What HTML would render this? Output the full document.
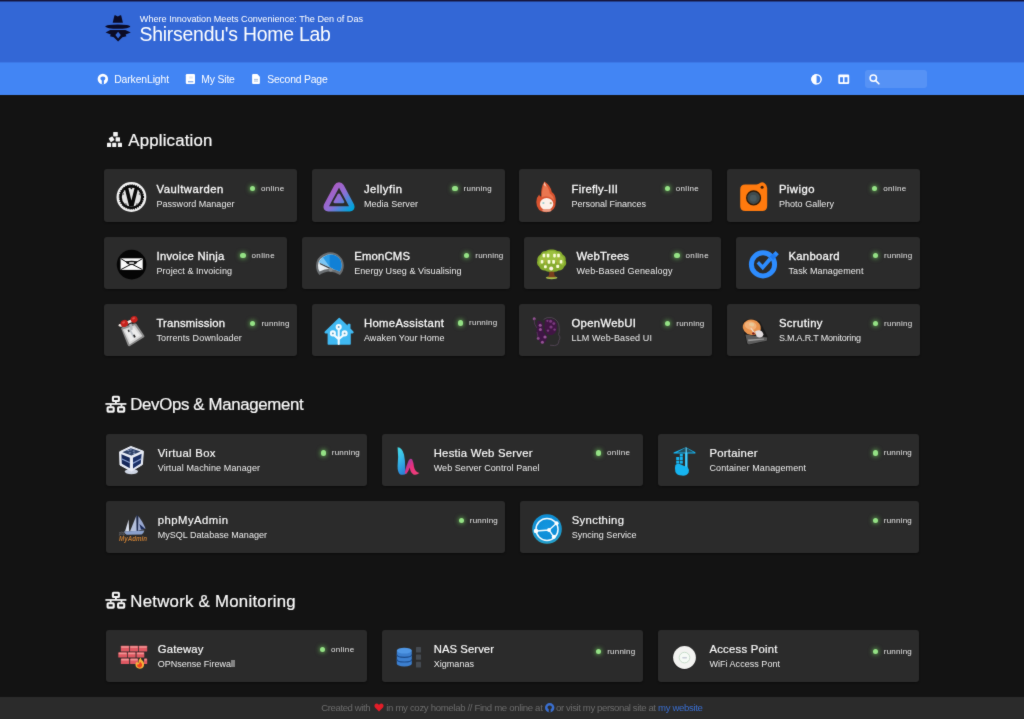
<!DOCTYPE html>
<html lang="en">
<head>
<meta charset="utf-8">
<title>Shirsendu's Home Lab</title>
<style>
*{box-sizing:border-box;margin:0;padding:0}
html,body{width:1024px;height:719px;overflow:hidden;background:#131313;font-family:"Liberation Sans",sans-serif;color:#eaeaea}
body{position:relative}
#app{position:absolute;left:0;top:0;width:1024px;height:719px;background:#131313;will-change:transform;filter:url(#soft)}
.topline{position:absolute;left:0;top:0;width:1024px;height:2px;background:linear-gradient(#15153e 0,#15153e 1px,#243f8c 1px,#243f8c 2px);z-index:2}
header.hero{position:absolute;left:0;top:0;width:1024px;height:63px;background:#3367d6}
.headline{position:absolute;left:139.8px;top:12.9px;font-size:9.1px;line-height:12px;color:#fff;white-space:nowrap}
h1.title{position:absolute;left:139.5px;top:22px;font-size:19.4px;line-height:24px;font-weight:400;color:#fff;white-space:nowrap}
nav.navbar{position:absolute;left:0;top:62px;width:1024px;height:33px;background:#4285f4;border-top:1px solid #3c79e8}
nav a{position:absolute;top:0.9px;height:32.7px;line-height:32.7px;font-size:9.7px;color:#fff;white-space:nowrap;text-decoration:none}
.search{position:absolute;left:865px;top:6.5px;width:62px;height:18.6px;border-radius:3px;background:rgba(255,255,255,.11)}
h2.group{-webkit-text-stroke:.2px #fafafa;position:absolute;font-size:16.8px;line-height:20px;font-weight:400;color:#fafafa;white-space:nowrap}
.card{position:absolute;height:52.4px;background:#2b2b2b;border-radius:3px;box-shadow:0 1px 2px rgba(0,0,0,.4)}
svg.ic{position:absolute;display:block;overflow:visible}
.card p{position:absolute;left:52.2px;white-space:nowrap}
.card p.t{top:12.4px;font-size:11.3px;line-height:14px;color:#fafafa;-webkit-text-stroke:.3px #fafafa}
.card p.t.l{-webkit-text-stroke:.18px #fafafa}
.card p.s{top:28.4px;font-size:9px;line-height:12px;color:#ededed}
.st{position:absolute;top:14px;height:11px;font-size:8px;line-height:11px;color:#e6e6e6;white-space:nowrap}
.st i{position:absolute;left:-2.6px;top:3px;width:5.2px;height:5.2px;border-radius:50%;background:#94e185;box-shadow:0 0 4px 1px rgba(120,220,100,.55)}
.st span{position:absolute;left:8.6px;top:0}
.st.online span{letter-spacing:.33px}
.st.running span{letter-spacing:.22px}
footer{position:absolute;left:0;top:697px;width:1024px;height:22px;background:#2b2b2b;color:#6c6c6c;font-size:9.2px;white-space:nowrap}
footer span,footer a{position:absolute;top:0.2px;line-height:22px;height:22px}
footer a{color:#3a6ecf;text-decoration:none}
</style>
</head>
<body>
<svg width="0" height="0" style="position:absolute" aria-hidden="true"><defs><filter id="soft" x="0" y="0" width="100%" height="100%" color-interpolation-filters="sRGB"><feConvolveMatrix order="3" kernelMatrix="0.02 0.065 0.02 0.065 0.66 0.065 0.02 0.065 0.02" divisor="1" edgeMode="duplicate" preserveAlpha="true"/></filter></defs></svg>
<div id="app">
<div class="topline"></div>
<header class="hero">
  <p class="headline"><span style="font-size:9.1px;letter-spacing:0.009px">Where Innovation Meets Convenience: The Den of Das</span></p>
  <h1 class="title"><span style="font-size:19.4px;letter-spacing:-0.225px">Shirsendu's Home Lab</span></h1>
</header>
<nav class="navbar">
  <a href="#" style="left:114.2px"><span style="font-size:10.4px;letter-spacing:-0.113px">DarkenLight</span></a>
  <a href="#" style="left:201.3px"><span style="font-size:10.4px;letter-spacing:-0.176px">My Site</span></a>
  <a href="#" style="left:267.3px"><span style="font-size:10.4px;letter-spacing:-0.201px">Second Page</span></a>
  <div class="search"></div>
</nav>
<main>
<h2 class="group" style="left:128.3px;top:130.7px"><span style="font-size:16.8px;letter-spacing:0.189px">Application</span></h2>
<h2 class="group" style="left:130.3px;top:395.2px"><span style="font-size:16.8px;letter-spacing:-0.316px">DevOps &amp; Management</span></h2>
<h2 class="group" style="left:130.3px;top:591.6px"><span style="font-size:16.8px;letter-spacing:0.262px">Network &amp; Monitoring</span></h2>
<div class="card" style="left:104.3px;top:169.3px;width:192.7px">
<p class="t" style="left:52.2px;letter-spacing:0.483px">Vaultwarden</p>
<p class="s" style="left:52.2px;letter-spacing:0.03px">Password Manager</p>
<div class="st online" style="left:148.2px;top:13.9px"><i></i><span>online</span></div>
</div>
<div class="card" style="left:311.7px;top:169.3px;width:193.0px">
<p class="t" style="left:52.2px;letter-spacing:0.51px">Jellyfin</p>
<p class="s" style="left:52.2px;letter-spacing:0.052px">Media Server</p>
<div class="st running" style="left:143.3px;top:13.9px"><i></i><span>running</span></div>
</div>
<div class="card" style="left:519.3px;top:169.3px;width:192.7px">
<p class="t" style="left:52.2px;letter-spacing:0.256px">Firefly-III</p>
<p class="s" style="left:52.2px;letter-spacing:-0.003px">Personal Finances</p>
<div class="st online" style="left:147.9px;top:13.9px"><i></i><span>online</span></div>
</div>
<div class="card" style="left:726.7px;top:169.3px;width:193.0px">
<p class="t" style="left:52.2px;letter-spacing:0.464px">Piwigo</p>
<p class="s" style="left:52.2px;letter-spacing:0.047px">Photo Gallery</p>
<div class="st online" style="left:148.0px;top:13.9px"><i></i><span>online</span></div>
</div>
<div class="card" style="left:104.3px;top:236.7px;width:182.5px">
<p class="t" style="left:52.2px;letter-spacing:0.259px">Invoice Ninja</p>
<p class="s" style="left:52.2px;letter-spacing:0.053px">Project &amp; Invoicing</p>
<div class="st online" style="left:138.7px;top:13.6px"><i></i><span>online</span></div>
</div>
<div class="card" style="left:302.0px;top:236.7px;width:207.5px">
<p class="t" style="left:52.2px;letter-spacing:0.196px">EmonCMS</p>
<p class="s" style="left:52.2px;letter-spacing:0.059px">Energy Useg &amp; Visualising</p>
<div class="st running" style="left:164.7px;top:13.6px"><i></i><span>running</span></div>
</div>
<div class="card" style="left:524.3px;top:236.7px;width:197.0px">
<p class="t" style="left:52.2px;letter-spacing:0.145px">WebTrees</p>
<p class="s" style="left:52.2px;letter-spacing:0.172px">Web-Based Genealogy</p>
<div class="st online" style="left:152.7px;top:13.6px"><i></i><span>online</span></div>
</div>
<div class="card" style="left:736.3px;top:236.7px;width:183.4px">
<p class="t" style="left:52.2px;letter-spacing:0.286px">Kanboard</p>
<p class="s" style="left:52.2px;letter-spacing:0.104px">Task Management</p>
<div class="st running" style="left:139.2px;top:13.6px"><i></i><span>running</span></div>
</div>
<div class="card" style="left:104.3px;top:304.0px;width:192.7px">
<p class="t" style="left:52.2px;letter-spacing:0.159px">Transmission</p>
<p class="s" style="left:52.2px;letter-spacing:0.125px">Torrents Downloader</p>
<div class="st running" style="left:148.5px;top:13.8px"><i></i><span>running</span></div>
</div>
<div class="card" style="left:311.7px;top:304.0px;width:193.0px">
<p class="t" style="left:52.2px;letter-spacing:0.344px">HomeAssistant</p>
<p class="s" style="left:52.2px;letter-spacing:0.114px">Awaken Your Home</p>
<div class="st running" style="left:148.8px;top:13.4px"><i></i><span>running</span></div>
</div>
<div class="card" style="left:519.3px;top:304.0px;width:192.7px">
<p class="t" style="left:52.2px;letter-spacing:0.316px">OpenWebUI</p>
<p class="s" style="left:52.2px;letter-spacing:0.142px">LLM Web-Based UI</p>
<div class="st running" style="left:148.4px;top:13.8px"><i></i><span>running</span></div>
</div>
<div class="card" style="left:726.7px;top:304.0px;width:193.0px">
<p class="t" style="left:52.2px;letter-spacing:0.398px">Scrutiny</p>
<p class="s" style="left:52.2px;letter-spacing:-0.199px">S.M.A.R.T Monitoring</p>
<div class="st running" style="left:148.8px;top:13.6px"><i></i><span>running</span></div>
</div>
<div class="card" style="left:106.0px;top:433.5px;width:261.0px">
<p class="t l" style="left:51.7px;letter-spacing:0.338px">Virtual Box</p>
<p class="s" style="left:51.7px;letter-spacing:0.11px">Virtual Machine Manager</p>
<div class="st running" style="left:217.2px;top:13.9px"><i></i><span>running</span></div>
</div>
<div class="card" style="left:382.0px;top:433.5px;width:261.0px">
<p class="t l" style="left:51.7px;letter-spacing:0.262px">Hestia Web Server</p>
<p class="s" style="left:51.7px;letter-spacing:0.061px">Web Server Control Panel</p>
<div class="st online" style="left:216.3px;top:13.9px"><i></i><span>online</span></div>
</div>
<div class="card" style="left:657.7px;top:433.5px;width:261.3px">
<p class="t l" style="left:51.7px;letter-spacing:0.282px">Portainer</p>
<p class="s" style="left:51.7px;letter-spacing:0.134px">Container Management</p>
<div class="st running" style="left:217.5px;top:13.9px"><i></i><span>running</span></div>
</div>
<div class="card" style="left:106.0px;top:501.0px;width:399.0px">
<p class="t l" style="left:51.7px;letter-spacing:0.485px">phpMyAdmin</p>
<p class="s" style="left:51.7px;letter-spacing:0.027px">MySQL Database Manager</p>
<div class="st running" style="left:355.2px;top:13.9px"><i></i><span>running</span></div>
</div>
<div class="card" style="left:520.0px;top:501.0px;width:399.0px">
<p class="t l" style="left:51.7px;letter-spacing:0.334px">Syncthing</p>
<p class="s" style="left:51.7px;letter-spacing:0.019px">Syncing Service</p>
<div class="st running" style="left:355.2px;top:13.9px"><i></i><span>running</span></div>
</div>
<div class="card" style="left:106.0px;top:630.0px;width:261.0px">
<p class="t l" style="left:51.7px;letter-spacing:0.201px">Gateway</p>
<p class="s" style="left:51.7px;letter-spacing:0.017px">OPNsense Firewall</p>
<div class="st online" style="left:216.5px;top:13.9px"><i></i><span>online</span></div>
</div>
<div class="card" style="left:382.0px;top:630.0px;width:261.0px">
<p class="t l" style="left:51.7px;letter-spacing:0.073px">NAS Server</p>
<p class="s" style="left:51.7px;letter-spacing:0.038px">Xigmanas</p>
<div class="st running" style="left:216.6px;top:15.8px"><i></i><span>running</span></div>
</div>
<div class="card" style="left:657.7px;top:630.0px;width:261.3px">
<p class="t l" style="left:51.7px;letter-spacing:0.253px">Access Point</p>
<p class="s" style="left:51.7px;letter-spacing:0.038px">WiFi Access Pont</p>
<div class="st running" style="left:217.5px;top:15.8px"><i></i><span>running</span></div>
</div>
<svg class="ic" style="left:111px;top:177px" width="40" height="40" viewBox="0 0 40 40"><circle cx="20.4" cy="20" r="14.9" fill="#f2f2f2"/>
<circle cx="20.4" cy="20" r="11.9" fill="#0a0a0a" stroke="#0a0a0a" stroke-width="1.6" stroke-dasharray="1.1 1.05"/>
<circle cx="20.4" cy="20" r="9.6" fill="#e4e4e4"/>
<path d="M13.5 10.6 L17.2 10.6 L20.4 23.6 L23.7 10.6 L27.3 10.6 L22.6 29.6 L18.2 29.6 Z" fill="#0a0a0a"/>
<path d="M18.7 10.3 L22.1 10.3 L20.4 12.4 Z" fill="#0a0a0a"/>
<circle cx="12.2" cy="17" r="1" fill="#777"/><circle cx="28.6" cy="17" r="1" fill="#777"/><circle cx="14.8" cy="27.2" r="1" fill="#666"/><circle cx="26" cy="27.2" r="1" fill="#666"/></svg>
<svg class="ic" style="left:319px;top:177px" width="40" height="40" viewBox="0 0 40 40"><defs><linearGradient id="jg" gradientUnits="userSpaceOnUse" x1="11" y1="12" x2="32" y2="32"><stop offset="0" stop-color="#aa5cc3"/><stop offset=".45" stop-color="#8f6fd6"/><stop offset="1" stop-color="#00a4dc"/></linearGradient></defs><path d="M20 7.8 Q21.5 7.8 22.4 9.4 L32.6 28.4 Q33.8 31.6 30.6 31.9 L9.4 31.9 Q6.2 31.6 7.4 28.4 L17.6 9.4 Q18.5 7.8 20 7.8 Z" fill="none" stroke="url(#jg)" stroke-width="5.3" stroke-linejoin="round"/>
<path d="M19.9 16.6 Q20.7 16.6 21.3 17.6 L25.2 24.6 Q25.8 26.3 24.2 26.3 L15.6 26.3 Q14 26.3 14.6 24.6 L18.5 17.6 Q19.1 16.6 19.9 16.6 Z" fill="url(#jg)"/></svg>
<svg class="ic" style="left:526px;top:177px" width="40" height="40" viewBox="0 0 40 40"><path d="M18.4 4.6 Q24.6 8.6 25.8 15 Q29.6 17.2 29.8 24 Q30 34.6 20.4 35.2 Q10.4 35 10.3 25 Q10.3 20.4 13.2 17.4 Q13.8 19.8 15.2 19.4 Q14.6 10.5 18.4 4.6 Z" fill="#d8532f"/>
<path d="M18.8 6.6 Q23 11 23.8 16.4 Q27.6 18.4 27.9 23.6 Q25 19.6 20 19.6 Q17 19.6 15.8 20.6 Q15.6 12 18.8 6.6 Z" fill="#ea7650"/>
<path d="M18.3 5 Q20 7.4 20.4 10 Q19.2 8.2 17.6 8.2 Z" fill="#f6c4ae"/>
<ellipse cx="20.6" cy="27" rx="6.7" ry="6" fill="#fcf0ea"/>
<ellipse cx="20.8" cy="33.4" rx="4.6" ry="1.4" fill="#ea9c84"/>
<circle cx="17.4" cy="26" r="1.1" fill="#9cc"/><circle cx="24.8" cy="26.2" r="1.1" fill="#b9a877"/></svg>
<svg class="ic" style="left:734px;top:177px" width="40" height="40" viewBox="0 0 40 40"><path d="M11.2 7.6 L22.4 7.4 Q24.4 7.2 26 6 Q28.4 4.6 30.6 6.2 Q33.2 8 33.2 11 L33.2 28.8 Q33.2 34 28 34 L11.2 34 Q6.2 34 6.2 29 L6.2 12.6 Q6.2 7.6 11.2 7.6 Z" fill="#ff7a0e"/>
<circle cx="19.6" cy="20.9" r="6.9" fill="#3f4a4c" stroke="#2a1a0a" stroke-width="1.3"/>
<circle cx="19.3" cy="21.2" r="3.4" fill="#4a5a5e"/>
<circle cx="28.1" cy="10.3" r="1.5" fill="#3a1a08"/></svg>
<svg class="ic" style="left:111px;top:244px" width="40" height="40" viewBox="0 0 40 40"><circle cx="20.6" cy="20.6" r="14.8" fill="#050505"/>
<path d="M9.6 14.3 L31.7 14.3 L31.7 25.9 L9.6 25.9 Z" fill="#fafafa"/>
<path d="M9.8 25.6 L20.6 20 L31.5 25.6 M9.8 14.6 L17 19 M31.5 14.6 L24.2 19" stroke="#111" stroke-width="1" fill="none"/>
<path d="M14.6 17.2 Q20.6 16.4 26.6 17.2 L25.4 19.6 Q20.6 22.6 15.8 19.6 Z" fill="#111"/>
<rect x="18" y="18.2" width="5.2" height="1.5" rx=".7" fill="#fafafa"/></svg>
<svg class="ic" style="left:309px;top:244px" width="40" height="40" viewBox="0 0 40 40"><path d="M10.4 31 Q6.8 26.6 7 21.4 Q7.6 11.4 18.6 8.6 Q23 7.8 27 9.6 Q34.6 13.4 34.8 21.6 Q34.8 27 31 31 Q26 27.4 20.8 27.4 Q15.4 27.4 10.4 31 Z" fill="#6b6f72"/>
<path d="M10.6 27.6 Q8.8 24.6 9 21.2 Q9.6 13.4 18.8 10.8 Q23 10.2 26.4 11.6 Q32.4 14.6 32.6 21.6 Q32.6 25 30.6 27.6 Q26 24.8 20.8 24.8 Q15.4 24.8 10.6 27.6 Z" fill="#e8eef2"/>
<path d="M10.2 18.2 Q12.8 12.6 18.8 10.8 Q23 10.2 26.4 11.6 Q32.4 14.6 32.6 21.6 Q32.6 25 30.6 27.6 Q28 26 25 25.3 L20.8 23 Z" fill="#2a9be6"/>
<path d="M20.6 11 Q23.6 10.4 26.4 11.6 Q32.4 14.6 32.6 21.6 Q32.6 25 30.6 27.6 Q28 26 25 25.3 L20.8 23 Z" fill="#1180d6"/>
<path d="M10.2 18.2 Q11.4 15.4 14 13.4 L20.8 23 Z" fill="#7cc6f4"/>
<path d="M11 19 L23 24.4 L22.4 25.8 L10.6 20 Z" fill="#3a4046"/>
<circle cx="21.6" cy="25.8" r="2" fill="#8a8e90"/></svg>
<svg class="ic" style="left:531px;top:244px" width="40" height="40" viewBox="0 0 40 40"><ellipse cx="20.6" cy="33.8" rx="5.8" ry="1.5" fill="#a9bf4a"/>
<path d="M18 26 L23.4 26 L23.2 30 Q23.6 32.4 25 33.2 L16.4 33.2 Q18 32.4 18.2 30 Z" fill="#7a3f1e"/>
<path d="M20.6 5.6 Q24 5 26.4 7 Q30.4 7 31.6 10.4 Q35.4 12.4 34.6 16.6 Q36.4 20.6 33 23 Q31.6 26.6 27.6 26.4 Q24.4 28.6 20.8 27.4 Q17 28.6 14 26.4 Q9.6 26.6 8.4 23 Q5 20.6 6.4 16.6 Q5.8 12.4 9.6 10.4 Q10.8 7 14.8 7 Q17.2 5 20.6 5.6 Z" fill="#86ac2e"/>
<path d="M20.6 7 Q23.6 6.6 25.6 8.4 Q29 8.6 30 11.4 Q33.2 13 32.8 16.6 Q34 19.6 31.6 21.6 Q24 17 20.6 17 Q14 17 9 21 Q7.2 19.6 8.2 16.6 Q7.8 13 11 11.4 Q12 8.6 15.4 8.4 Q17.6 6.6 20.6 7 Z" fill="#9cc040"/>
<g fill="#fbfbd8"><rect x="11.6" y="9.8" width="2.6" height="3.6" rx=".8"/><rect x="15.8" y="9.8" width="2.6" height="3.6" rx=".8"/><rect x="22.2" y="9.8" width="2.6" height="3.6" rx=".8"/><rect x="26.2" y="9.8" width="2.6" height="3.6" rx=".8"/>
<rect x="9.8" y="16" width="2.5" height="3.6" rx=".8"/><rect x="16.6" y="16" width="2.8" height="3.8" rx=".8"/><rect x="21.2" y="16" width="2.8" height="3.8" rx=".8"/><rect x="28.8" y="16" width="2.5" height="3.6" rx=".8"/>
<rect x="13" y="21.2" width="2.8" height="3" rx=".9"/><rect x="25.2" y="20.8" width="3" height="3.2" rx=".9"/></g>
<circle cx="20.2" cy="24.4" r="2" fill="#fff3e6"/>
<g stroke="#b8a83a" stroke-width=".9" fill="none"><path d="M12.9 13.6 L12.9 15.6 M27.5 13.6 L27.5 15.6 M14.6 15.4 L14.6 20.6 M26.6 15.4 L26.6 20.6"/></g></svg>
<svg class="ic" style="left:743px;top:244px" width="40" height="40" viewBox="0 0 40 40"><circle cx="20" cy="20.4" r="11.6" fill="none" stroke="#2d8cff" stroke-width="5"/>
<path d="M13.6 19.6 L16 17 L19.6 20.8 L25.8 13.6 L28.6 16.2 L19.8 26.2 Z" fill="#2d8cff"/>
<path d="M32.6 7 L35.8 10.2 L32.6 13.4 L29.4 10.2 Z" fill="#2d8cff"/>
<path d="M26.6 12.6 L30.6 9.4 L33.4 12.2 L30.2 16 Z" fill="#1f7af0"/></svg>
<svg class="ic" style="left:111px;top:312px" width="40" height="40" viewBox="0 0 40 40"><path d="M10.4 17.2 Q9.6 15.8 11.2 15.2 L23.6 11.6 Q25 11.2 25.8 12.4 L33.2 23.4 Q34 24.8 32.6 25.6 L19 34 Q17.6 34.8 16.8 33.2 Z" fill="#8e8e8e"/>
<path d="M11.8 17.4 L23.8 13.2 L31.4 24 L18.6 32.4 Z" fill="#d6d6d6"/>
<path d="M13.8 18.6 L23 15.6 L28.8 23.6 L19.4 29.8 Z" fill="#ececec"/>
<path d="M17.6 17.6 L19.4 17 L24 25 L22.4 26 Z" fill="#c2c6cc"/>
<rect x="17" y="17.8" width="1.4" height="2.2" fill="#333" transform="rotate(-25 17.7 18.9)"/>
<rect x="22.6" y="22.6" width="1.6" height="3" fill="#222" transform="rotate(-25 23.4 24.1)"/>
<path d="M18 12.6 L20.6 11.6 L21.8 17.4 L19.6 18.2 Z" fill="#b8bcc0"/>
<path d="M8.6 12.4 L23.6 6 L24.6 8.6 L9.6 15 Z" fill="#f4e8e4"/>
<circle cx="8.9" cy="13.3" r="1.3" fill="#f0e6e0"/>
<ellipse cx="13.3" cy="11.4" rx="3.8" ry="3.5" fill="#c4211c" transform="rotate(-22 13.3 11.4)"/>
<ellipse cx="23.1" cy="7.4" rx="3.5" ry="3.3" fill="#c4211c" transform="rotate(-22 23.1 7.4)"/>
<ellipse cx="12.6" cy="10.4" rx="1.6" ry="1.1" fill="#e2504a" transform="rotate(-22 12.6 10.4)"/>
<ellipse cx="22.6" cy="6.4" rx="1.5" ry="1" fill="#e2504a" transform="rotate(-22 22.6 6.4)"/></svg>
<svg class="ic" style="left:319px;top:312px" width="40" height="40" viewBox="0 0 40 40"><path d="M19.7 6 Q20.2 5.6 20.8 6.1 L28.6 13.6 L28.6 12.4 Q28.6 11.8 29.2 11.8 L30.8 11.8 Q31.5 11.8 31.5 12.4 L31.5 16.6 L34.4 19.6 Q35.4 21.2 33.6 21.5 L31.8 21.5 L31.8 32 Q31.8 32.8 31 32.8 L9.4 32.8 Q8.6 32.8 8.6 32 L8.6 21.5 L6.4 21.5 Q4.8 21.2 5.8 19.6 Z" fill="#40b9f2"/>
<g stroke="#f4fbff" stroke-width="2.1" fill="none" stroke-linecap="round"><path d="M19.7 17 L19.7 32 M14.6 22.6 L19.7 27.2 M25 22.6 L19.7 27.2"/></g>
<g fill="#5a9ec0" stroke="#f4fbff" stroke-width="2.1"><circle cx="19.7" cy="15" r="2"/><circle cx="13.9" cy="21.4" r="2"/><circle cx="25.6" cy="21.4" r="2"/></g></svg>
<svg class="ic" style="left:526px;top:312px" width="40" height="40" viewBox="0 0 40 40"><g opacity=".85"><path d="M17.6 7.4 Q20.6 4.8 25.6 5.6 Q33 7.6 33.2 15.6 Q33.6 19.6 32.6 22.6 Q34.6 25 33.8 27 Q32.6 28 32.8 30 Q32.6 33.4 28.6 33.6 L24 33.2" fill="none" stroke="#5a4a5e" stroke-width=".9"/>
<path d="M11.6 9 Q14 8 16.4 11 L17.6 20 Q20 22 21 25 Q21 29.6 17 31.6 Q14.6 32 12.6 28 L10.6 20 Z" fill="#43124a"/>
<path d="M19 8 Q23 6 27 7.6 Q31.6 10.6 31 16 Q30 21.6 26 23 Q21.6 23.6 19.4 20 Q17.6 14 19 8 Z" fill="#451249"/>
<g fill="#a85aa8"><circle cx="8.2" cy="6.8" r="1.5"/><circle cx="14.2" cy="13.2" r="1.5"/><circle cx="14.4" cy="17.6" r="1.5"/><circle cx="12.2" cy="26.4" r="1.4"/><circle cx="16.4" cy="30.2" r="1.5"/><circle cx="19" cy="25" r="1.6"/></g>
<g fill="#8a3e8e"><circle cx="24.6" cy="9.2" r="1.5"/><circle cx="27.8" cy="11.6" r="1.4"/><circle cx="25" cy="15" r="1.6"/><circle cx="28.6" cy="17.6" r="1.2"/><circle cx="22" cy="18.6" r="1.2"/><circle cx="21.4" cy="8.8" r="1.1"/></g>
<path d="M8.2 6.8 L8.6 12 L11 16 M12.2 26.4 L11 20" stroke="#6a3a6e" stroke-width=".7" fill="none"/></g></svg>
<svg class="ic" style="left:734px;top:312px" width="40" height="40" viewBox="0 0 40 40"><path d="M9 10.4 Q12 6.4 19 7 L26 9.4 L33.6 24.6 L33 29 L15 33 Q13.4 33 12.6 31.6 L8.6 13.6 Z" fill="#1a1a1a"/>
<path d="M11.4 22.4 L33.2 25.4 L32.8 28.8 L15 32.4 Q13.6 32.2 13.2 31 Z" fill="#5c5c5c"/>
<path d="M14 27.4 L30 26.6 L30 27.6 L14.4 29.2 Z" fill="#9a9a9a"/>
<ellipse cx="17.8" cy="15.3" rx="9.2" ry="7.6" fill="#e8934e" transform="rotate(12 17.8 15.3)"/>
<ellipse cx="16.6" cy="13.6" rx="6" ry="4.2" fill="#f2b078" transform="rotate(12 16.6 13.6)"/>
<ellipse cx="17.6" cy="12.6" rx="2.6" ry="1.8" fill="#e8c898" transform="rotate(12 17.6 12.6)"/>
<path d="M21 19.6 Q25 17 28 19.4 Q30.4 22 28.6 24.6 Q25.6 26.4 22.6 24.6 Z" fill="#e2dcde"/>
<path d="M17 15.6 L21 20.4 L19.6 21.4 L16.4 16.2 Z" fill="#f0d8c8"/>
<circle cx="19.4" cy="21.4" r="1.2" fill="#7a1414"/></svg>
<svg class="ic" style="left:113px;top:441px" width="40" height="40" viewBox="0 0 40 40"><ellipse cx="18.4" cy="30.6" rx="6.6" ry="2.6" fill="#cfd6e4"/>
<path d="M17.8 5.4 L30.4 10.2 L29.4 23.6 L18.4 30.2 L7 24 L6.6 10.8 Z" fill="#e8ecf6" stroke="#e8ecf6" stroke-width="1" stroke-linejoin="round"/>
<path d="M17.8 7.2 L27.6 10.6 L18.4 14.6 L9.4 11.2 Z" fill="#2c3f66"/>
<path d="M8.4 13.2 L16.8 16.8 L16.8 27.2 L8.8 22.8 Z" fill="#16285a"/>
<path d="M20 16.8 L28.6 12.8 L27.8 22.6 L20 27.4 Z" fill="#1a2f66"/>
<path d="M8.6 17.2 L16.8 21 L16.8 22.2 L8.6 18.4 Z M20 21.6 L28.2 17.2 L28.2 18.6 L20 23 Z" fill="#8aa0d0"/>
<g fill="#8fa0c4"><path d="M13.6 9.6 L15.4 8.9 L17 9.5 L15.2 10.2 Z M17.6 8.2 L19.4 8.8 L17.8 9.4 L16.2 8.8 Z M20.8 9.4 L22.6 10 L20.8 10.8 L19.2 10.2 Z M16.8 11.2 L18.6 11.8 L16.8 12.6 L15.2 12 Z M21 11.6 L23 12.2 L21.2 13 L19.6 12.4 Z"/></g></svg>
<svg class="ic" style="left:389px;top:441px" width="40" height="40" viewBox="0 0 40 40"><defs><linearGradient id="hg1" x1="0" y1="0" x2="0.3" y2="1"><stop offset="0" stop-color="#46dce6"/><stop offset=".5" stop-color="#36b8e8"/><stop offset="1" stop-color="#2a86d8"/></linearGradient><linearGradient id="hg2" gradientUnits="userSpaceOnUse" x1="16" y1="22" x2="29" y2="32"><stop offset="0" stop-color="#9a3ea8"/><stop offset=".45" stop-color="#e8307e"/><stop offset="1" stop-color="#f0407a"/></linearGradient></defs><path d="M8.6 6.2 Q13.2 6.6 15 13.4 Q16.4 20 16.2 27 Q16.6 31.4 17.6 32.4 Q14.6 34.6 11.2 33.4 Q8.4 31.6 8.6 25 Q9.6 16 8.6 6.2 Z" fill="url(#hg1)"/>
<path d="M15.6 32.6 Q17 25 19.6 19.6 Q21.4 16.6 23.2 18.6 Q24.6 21.6 25 26 Q26 30.8 30.4 32 Q27.6 34.4 24.4 33.4 Q21.4 32 20.8 26.6 Q19.4 30.6 17.6 32.6 Z" fill="url(#hg2)"/></svg>
<svg class="ic" style="left:665px;top:441px" width="40" height="40" viewBox="0 0 40 40"><g fill="#16b4f0">
<rect x="20" y="7.4" width="2.6" height="19"/>
<path d="M20.9 6.2 L30.4 11.2 L30.4 12.4 L8.6 12.4 L8.6 11.4 Z"/>
<rect x="11.2" y="16" width="3" height="3"/><rect x="14.8" y="16" width="3" height="3"/><rect x="14.8" y="12.8" width="3" height="2.8"/>
<rect x="11.2" y="19.6" width="3" height="3"/><rect x="14.8" y="19.6" width="3" height="3"/>
<path d="M10.4 24 Q13 21.6 16 23.6 Q19 25.4 22.6 26 Q24.6 28.6 23.6 31.8 Q21.6 35 17 34.6 Q12 34.6 10.4 31 Q9.4 27 10.4 24 Z"/>
</g><path d="M20.9 6.6 L29 11.4 L12 11.4 Z" fill="#2b2b2b" opacity=".75"/><rect x="20.6" y="6.6" width="1.2" height="19" fill="#5fd0f8"/></svg>
<svg class="ic" style="left:113px;top:509px" width="40" height="40" viewBox="0 0 40 40"><path d="M15.6 10.4 L16.2 22.4 L12 22.4 Z" fill="#d6dcea"/>
<path d="M23.4 6.6 L24 22 L17 22.2 Z" fill="#b4c0dc"/>
<path d="M25.4 7 Q30 13 32.6 19.6 L25 21.8 Z" fill="#9aa8d0"/>
<path d="M26.4 15 L32 19.8 L28 20.6 Z" fill="#1a2a5a"/>
<rect x="23.6" y="6.4" width="1.2" height="16" fill="#1a2a55"/>
<path d="M10.8 22.6 L31.4 21.6 Q30.6 24.6 28.6 25.6 L13.6 25.8 Q11.6 24.6 10.8 22.6 Z" fill="#8aa0cc"/>
<text x="6" y="31.8" font-family="Liberation Sans, sans-serif" font-size="6.4" font-style="italic" font-weight="700" fill="#c47c34" textLength="28" lengthAdjust="spacingAndGlyphs">MyAdmin</text>
<text x="6" y="25.6" font-family="Liberation Sans, sans-serif" font-size="4.6" font-style="italic" fill="#77777f" textLength="6.4" lengthAdjust="spacingAndGlyphs">php</text></svg>
<svg class="ic" style="left:527px;top:509px" width="40" height="40" viewBox="0 0 40 40"><defs><radialGradient id="sg" cx=".5" cy=".45" r=".55"><stop offset="0" stop-color="#1396e0"/><stop offset=".75" stop-color="#0d8dd6"/><stop offset="1" stop-color="#2aa6c8"/></radialGradient></defs><circle cx="20" cy="20" r="14.8" fill="url(#sg)"/>
<circle cx="20" cy="20.4" r="11" fill="none" stroke="#f2fbff" stroke-width="1.5"/>
<g stroke="#f2fbff" stroke-width="1.4"><path d="M22 21 L9 22 M22 21 L29.6 14.2 M22 21 L26.8 27.8"/></g>
<g fill="#fff"><circle cx="22" cy="21" r="1.9"/><circle cx="9" cy="22" r="2.3"/><circle cx="29.6" cy="14.2" r="2"/><circle cx="26.8" cy="27.8" r="2.1"/></g></svg>
<svg class="ic" style="left:113px;top:638px" width="40" height="40" viewBox="0 0 40 40"><rect x="7.8" y="7.8" width="8.4" height="5.6" rx=".5" fill="#de5862"/><rect x="8.2" y="8.2" width="7.6" height="1.6" rx=".4" fill="#f29696"/><rect x="16.9" y="7.8" width="8.2" height="5.6" rx=".5" fill="#de5862"/><rect x="17.299999999999997" y="8.2" width="7.4" height="1.6" rx=".4" fill="#f29696"/><rect x="25.8" y="7.8" width="8.4" height="5.6" rx=".5" fill="#de5862"/><rect x="26.2" y="8.2" width="7.6" height="1.6" rx=".4" fill="#f29696"/><rect x="5.3" y="14.3" width="8.7" height="5.1" rx=".5" fill="#de5862"/><rect x="5.7" y="14.700000000000001" width="7.9" height="1.6" rx=".4" fill="#f29696"/><rect x="14.7" y="14.3" width="7.9" height="5.1" rx=".5" fill="#de5862"/><rect x="15.1" y="14.700000000000001" width="7.1" height="1.6" rx=".4" fill="#f29696"/><rect x="23.5" y="14.3" width="7.8" height="5.1" rx=".5" fill="#de5862"/><rect x="23.9" y="14.700000000000001" width="7.0" height="1.6" rx=".4" fill="#f29696"/><rect x="7.8" y="20.4" width="8.4" height="5.7" rx=".5" fill="#de5862"/><rect x="8.2" y="20.799999999999997" width="7.6" height="1.6" rx=".4" fill="#f29696"/><rect x="17.1" y="20.4" width="8.0" height="5.7" rx=".5" fill="#de5862"/><rect x="17.5" y="20.799999999999997" width="7.2" height="1.6" rx=".4" fill="#f29696"/><rect x="31" y="20.4" width="3.2" height="5.7" rx=".5" fill="#de5862"/><rect x="31.4" y="20.799999999999997" width="2.4" height="1.6" rx=".4" fill="#f29696"/><path d="M27.6 19.4 Q28.2 21.8 30 23 Q31.6 25 31 27.6 Q30 30.8 26.8 30.8 Q22.6 30.6 22.4 26.6 Q22.6 24.6 24 23.4 Q24.4 25 25.4 24.8 Q25.2 21.6 27.6 19.4 Z" fill="#f6b23a"/>
<path d="M27 23.6 Q29.4 25.6 29 27.8 Q28.4 29.8 26.6 29.8 Q24 29.6 24 27.2 Q24.4 25.8 25.6 26.4 Q26.6 25.6 27 23.6 Z" fill="#f0421e"/></svg>
<svg class="ic" style="left:389px;top:638px" width="40" height="40" viewBox="0 0 40 40"><g fill="#3c7fcf"><path d="M7.8 12.6 L22.8 12.6 L22.8 25.6 Q22.8 28.4 15.3 28.4 Q7.8 28.4 7.8 25.6 Z"/></g>
<ellipse cx="15.3" cy="12.6" rx="7.5" ry="2.9" fill="#4f96e4"/>
<path d="M7.8 16.6 Q7.8 19.4 15.3 19.4 Q22.8 19.4 22.8 16.6 M7.8 21.2 Q7.8 24 15.3 24 Q22.8 24 22.8 21.2" fill="none" stroke="#1c4c8c" stroke-width="1.1"/>
<g fill="#454b52"><rect x="27" y="9" width="5" height="5.4" rx=".5"/><rect x="27" y="16.4" width="5" height="5.4" rx=".5"/><rect x="27" y="23.8" width="5" height="5.6" rx=".5"/></g></svg>
<svg class="ic" style="left:665px;top:638px" width="40" height="40" viewBox="0 0 40 40"><circle cx="19.2" cy="19.9" r="11.8" fill="#1c1c1c"/>
<circle cx="19.5" cy="19.5" r="11.4" fill="#f3f3f1"/>
<circle cx="19.5" cy="19.6" r="5.3" fill="#f6fbf6" stroke="#bcd6c0" stroke-width=".8"/>
<rect x="17.2" y="19" width="4.8" height="1.4" rx=".6" fill="#c8ccd8"/></svg>
<svg class="ic" style="left:100px;top:8px" width="40" height="40" viewBox="0 0 40 40"><g fill="#0b0b26">
<path d="M12.7 14.7 L14.4 7.6 Q14.6 7 15.3 7.3 L17.8 8.4 L20.3 7.3 Q21 7 21.2 7.6 L22.9 14.7 Z"/>
<ellipse cx="17.8" cy="18.6" rx="12.4" ry="2.2"/>
<path fill-rule="evenodd" d="M5.6 24.4 L10.2 21.9 L25.4 21.9 L30.8 24.4 L25.6 26.6 L26.4 28.2 L22.4 29.2 L18.1 33.6 L13.8 29.2 L10 28.2 L10.8 26.6 Z M18.1 23.8 L15.4 27 L18.1 30.4 L20.8 27 Z"/>
</g></svg>
<svg class="ic" style="left:92px;top:66px" width="30" height="26" viewBox="0 0 30 26"><circle cx="10.85" cy="12.95" r="5.2" fill="#fff"/>
<path fill="#4285f4" d="M8.4 12.6 Q8.2 10.6 10.85 10.5 Q13.5 10.6 13.3 12.6 Q13.2 14.1 11.9 14.5 L11.9 18.3 L9.8 18.3 L9.8 14.5 Q8.5 14.1 8.4 12.6 Z"/></svg>
<svg class="ic" style="left:178px;top:66px" width="30" height="26" viewBox="0 0 30 26"><rect x="7.8" y="8.1" width="9.2" height="9.8" rx="1.2" fill="#fff"/>
<rect x="10" y="15.2" width="5.3" height="1.1" fill="#6a9ce8"/><rect x="11.2" y="10.4" width="3.6" height="2.2" fill="#dfe8f8"/></svg>
<svg class="ic" style="left:244px;top:66px" width="30" height="26" viewBox="0 0 30 26"><path fill="#fff" d="M8.1 9.1 Q8.1 8.1 9.1 8.1 L13.3 8.1 L15.9 10.7 L15.9 16.9 Q15.9 17.9 14.9 17.9 L9.1 17.9 Q8.1 17.9 8.1 16.9 Z"/>
<rect x="10" y="12.9" width="4" height="0.9" fill="#9fb6d8"/><rect x="10" y="14.6" width="4" height="0.9" fill="#9fb6d8"/></svg>
<svg class="ic" style="left:800px;top:62px" width="140" height="34" viewBox="0 0 140 34"><circle cx="16.55" cy="17.3" r="4.6" fill="none" stroke="#fff" stroke-width="1.4"/>
<path fill="#fff" d="M16.55 12 A5.3 5.3 0 0 0 16.55 22.6 Z"/></svg>
<svg class="ic" style="left:800px;top:62px" width="140" height="34" viewBox="0 0 140 34"><rect x="38.3" y="12.6" width="10.9" height="9.3" rx="1.2" fill="#fff"/>
<rect x="40" y="15.2" width="3" height="5" fill="#4285f4"/><rect x="44.5" y="15.2" width="3" height="5" fill="#4285f4"/></svg>
<svg class="ic" style="left:800px;top:62px" width="140" height="34" viewBox="0 0 140 34"><circle cx="73.3" cy="16.1" r="3.2" fill="none" stroke="#fff" stroke-width="1.5"/>
<path d="M75.7 18.6 L78.9 21.8" stroke="#fff" stroke-width="1.6" stroke-linecap="round"/></svg>
<svg class="ic" style="left:100px;top:126px" width="30" height="26" viewBox="0 0 30 26"><g fill="#f4f4f4">
<rect x="13.2" y="6" width="4.6" height="4.4" rx=".6"/>
<rect x="15.6" y="11.2" width="4.4" height="4.4" rx=".6"/>
<rect x="9.4" y="11" width="4.4" height="4.4" rx=".6" transform="rotate(-30 11.6 13.2)"/>
<rect x="7" y="16.8" width="4.1" height="4.3" rx=".6"/>
<rect x="12.2" y="16.8" width="4.1" height="4.3" rx=".6"/>
<rect x="17.9" y="16.8" width="4.1" height="4.3" rx=".6"/>
</g></svg>
<svg class="ic" style="left:100px;top:391px" width="30" height="26" viewBox="0 0 30 26"><g fill="none" stroke="#f6f6f6" stroke-width="2.1" stroke-linejoin="round">
<rect x="12.9" y="5.8" width="6" height="4.2" rx=".6"/>
<rect x="7.6" y="16.3" width="6.1" height="4.3" rx=".6"/>
<rect x="18.1" y="16.3" width="6.1" height="4.3" rx=".6"/>
</g>
<g fill="#f6f6f6"><rect x="5.4" y="12.1" width="21" height="1.7"/><rect x="15" y="10.5" width="1.8" height="2.4"/><rect x="9.8" y="13" width="1.8" height="2.6"/><rect x="20.6" y="13" width="1.8" height="2.6"/></g></svg>
<svg class="ic" style="left:100px;top:587.4px" width="30" height="26" viewBox="0 0 30 26"><g fill="none" stroke="#f6f6f6" stroke-width="2.1" stroke-linejoin="round">
<rect x="12.9" y="5.8" width="6" height="4.2" rx=".6"/>
<rect x="7.6" y="16.3" width="6.1" height="4.3" rx=".6"/>
<rect x="18.1" y="16.3" width="6.1" height="4.3" rx=".6"/>
</g>
<g fill="#f6f6f6"><rect x="5.4" y="12.1" width="21" height="1.7"/><rect x="15" y="10.5" width="1.8" height="2.4"/><rect x="9.8" y="13" width="1.8" height="2.6"/><rect x="20.6" y="13" width="1.8" height="2.6"/></g></svg>
</main>
<footer>
<span style="left:321.3px"><span style="font-size:9.6px;letter-spacing:-0.424px">Created with</span></span>
<svg class="ic" style="left:373.6px;top:6.2px" width="10" height="9" viewBox="0 0 10 9"><path d="M5 8.6 L1 4.6 Q-.2 3 .8 1.4 Q2 .1 3.6 .7 Q4.6 1.1 5 2 Q5.4 1.1 6.4 .7 Q8 .1 9.2 1.4 Q10.2 3 9 4.6 Z" fill="#e21d28"/></svg>
<span style="left:386.3px"><span style="font-size:9.6px;letter-spacing:-0.33px">in my cozy homelab // Find me online at</span></span>
<svg class="ic" style="left:544.9px;top:5.7px" width="9.4" height="9.4" viewBox="0 0 10.4 10.4"><circle cx="5.2" cy="5.2" r="5.2" fill="#3a6fd0"/><path fill="#2b2b2b" d="M2.75 4.85 Q2.55 2.85 5.2 2.75 Q7.85 2.85 7.65 4.85 Q7.55 6.35 6.25 6.75 L6.25 10.5 L4.15 10.5 L4.15 6.75 Q2.85 6.35 2.75 4.85 Z"/></svg>
<span style="left:556.1px"><span style="font-size:9.6px;letter-spacing:-0.408px">or visit my personal site at</span></span>
<a href="#" style="left:658.1px"><span style="font-size:9.6px;letter-spacing:-0.365px">my website</span></a>
</footer>
</div>
</body>
</html>
